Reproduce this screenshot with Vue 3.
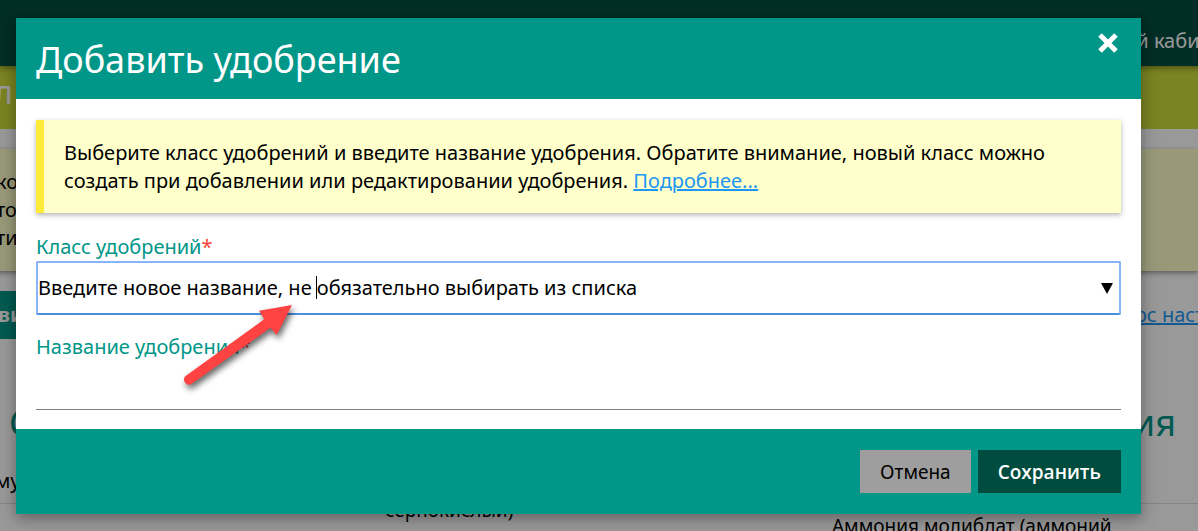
<script setup>
import { ref } from 'vue'

const fertilizerClass = ref('Введите новое название, не обязательно выбирать из списка')
const fertilizerName = ref('')
</script>

<template>
  <div class="screen">
    <div class="page">
      <header class="topbar"><a href="#">Личный кабинет</a></header>
      <div class="banner">Л</div>
      <div class="page-note">ко<br>тоя<br>тин</div>
      <div class="toolbar">
        <button type="button" class="add">ви</button>
        <a href="#">Курс настройки</a>
      </div>
      <div class="headings">
        <h2>С</h2>
        <h2>Удобрения</h2>
      </div>
      <div class="grid-row">му</div>
      <div class="grid-row second">
        <span></span>
        <span class="raised">серпокислый)</span>
        <span>Аммония молибдат (аммоний</span>
      </div>
    </div>

    <div class="overlay">
      <form class="dialog" role="dialog" aria-labelledby="dialog-title" @submit.prevent>
        <header class="dialog-head">
          <h1 id="dialog-title">Добавить удобрение</h1>
          <button type="button" class="close" aria-label="Закрыть">
            <svg viewBox="0 0 20 20" aria-hidden="true"><path d="M2 2 18 18M18 2 2 18" /></svg>
          </button>
        </header>

        <div class="dialog-body">
          <p class="info">
            Выберите класс удобрений и введите название удобрения. Обратите внимание, новый класс можно
            создать при добавлении или редактировании удобрения. <a href="#">Подробнее...</a>
          </p>

          <label for="fertilizer-class">Класс удобрений<span class="required">*</span></label>
          <div class="combo">
            <input id="fertilizer-class" v-model="fertilizerClass" type="text" role="combobox" aria-expanded="false">
            <span class="caret"></span>
            <button type="button" aria-label="Открыть список">
              <svg viewBox="0 0 12 11" aria-hidden="true"><path d="M0 0H12L6 11Z" /></svg>
            </button>
          </div>

          <label for="fertilizer-name">Название удобрения<span class="required">*</span></label>
          <input id="fertilizer-name" v-model="fertilizerName" class="line-input" type="text">

          <svg class="pointer" viewBox="0 0 130 110" aria-hidden="true">
            <path d="M13.6 82 92.3 25.3 87 16.7 120 11 104.7 41 98.5 33.7 19.4 90A5 5 0 0 1 13.6 82Z" />
          </svg>
        </div>

        <footer class="dialog-foot">
          <button type="button" class="cancel">Отмена</button>
          <button type="submit" class="save">Сохранить</button>
        </footer>
      </form>
    </div>
  </div>
</template>

<style>
html, body { margin: 0; overflow: hidden; }
</style>

<style scoped>
.screen {
  position: relative;
  height: 100vh;
  overflow: hidden;
  font: 20px/28px "Noto Sans", "Open Sans", sans-serif;
  color: #000;
  background: #fff;
}
* { box-sizing: border-box; }
h1, h2, p { margin: 0; font-weight: 400; }
button, input { font: inherit; border: 0; border-radius: 0; margin: 0; }
a { color: #2196f3; }

.topbar {
  position: relative;
  height: 66px;
  padding-top: 27px;
  margin-right: -34px;
  text-align: right;
  background: #004d40;
  box-shadow: 0 2px 6px rgba(0, 0, 0, .4);
}
.topbar a { color: #fff; text-decoration: none; }
.banner {
  height: 63px;
  margin-left: -6px;
  padding-top: 14px;
  color: #fff;
  font-size: 26px;
  font-weight: 500;
  background: #cddc39;
}
.page-note {
  height: 122px;
  margin: 20px 0 20px -4px;
  padding-top: 19px;
  background: #ffffcc;
  box-shadow: 0 2px 5px rgba(0, 0, 0, .4);
}
.toolbar {
  display: flex;
  justify-content: space-between;
  align-items: center;
  height: 48px;
  margin: 0 -66px 0 -2px;
}
.add {
  width: 120px;
  height: 48px;
  padding: 0;
  text-align: left;
  font-weight: 700;
  color: #fff;
  background: #009688;
}
.headings {
  display: flex;
  justify-content: space-between;
  height: 124px;
  padding: 66px 22px 0 9px;
}
h2 { font-size: 36px; line-height: 36px; color: #009688; }
.grid-row { height: 41px; margin-left: -5px; border-bottom: 1px solid #ddd; }
.grid-row:not(.second) { padding-top: 4px; }
.second {
  display: grid;
  grid-template-columns: 390px 447px 1fr;
  height: 60px;
  padding-top: 8px;
  font-size: 19px;
}
.raised { margin-top: -16px; }

.overlay {
  position: absolute;
  inset: 0;
  padding: 18px 57px 17px 16px;
  background: rgba(0, 0, 0, .4);
}
.dialog {
  position: relative;
  background: #fff;
  box-shadow: 0 4px 10px rgba(0, 0, 0, .2), 0 4px 20px rgba(0, 0, 0, .2);
}
.dialog-head {
  display: flex;
  justify-content: space-between;
  align-items: flex-start;
  padding: 15px 20px 12px;
  color: #fff;
  background: #009688;
}
h1 { font-size: 36px; line-height: 54px; }
.close { display: flex; padding: 0 3px; color: inherit; background: none; }
.close svg { width: 20px; height: 20px; fill: none; stroke: currentColor; stroke-width: 5; }

.dialog-body { position: relative; padding: 21px 20px 19px; }
.info {
  margin-bottom: 20px;
  padding: 19px 20px 18px;
  border-left: 8px solid #ffeb3b;
  background: #ffffcc;
  box-shadow: 0 2px 5px rgba(0, 0, 0, .3);
}
label { display: block; color: #009688; }
.required { color: #f44336; }
.combo {
  position: relative;
  display: flex;
  height: 54px;
  margin-bottom: 18px;
  border: 2px solid #8ab4f8;
  border-bottom-color: #4a90e2;
  border-radius: 2px;
}
.combo input { flex: 1; min-width: 0; padding: 0; outline: 0; background: none; }
.combo button { padding: 0 6px; display: flex; align-items: center; background: none; }
.combo button svg { width: 12px; height: 11px; }
.caret { position: absolute; top: 13px; left: 278px; width: 1px; height: 23px; background: #000; }
.line-input {
  display: block;
  width: 100%;
  height: 49px;
  padding: 0;
  outline: 0;
  border-bottom: 1px solid #808080;
  background: none;
}
.pointer {
  position: absolute;
  left: 156px;
  top: 195px;
  width: 130px;
  height: 110px;
  fill: #ff4242;
  filter: drop-shadow(2px 4px 3px rgba(0, 0, 0, .6));
  pointer-events: none;
}

.dialog-foot {
  display: flex;
  justify-content: flex-end;
  gap: 7px;
  padding: 21px 20px;
  background: #009688;
}
.dialog-foot button { height: 43px; padding: 0 20px; font-size: 19px; }
.cancel { color: #000; background: #9e9e9e; }
.save { color: #fff; background: #004d40; font-family: "Open Sans", "Noto Sans", sans-serif; font-weight: 600; }
</style>
